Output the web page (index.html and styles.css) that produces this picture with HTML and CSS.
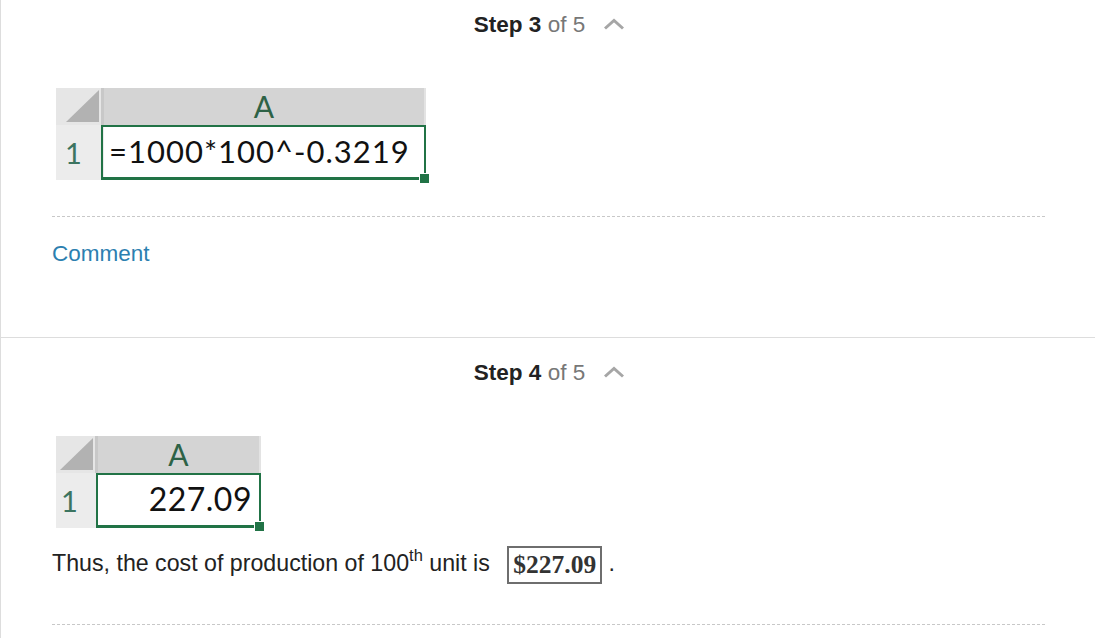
FILE: index.html
```html
<!DOCTYPE html>
<html>
<head>
<meta charset="utf-8">
<link rel="stylesheet" href="styles.css">
</head>
<body>
<div class="page">
  <section class="step first">
    <div class="step-head">
      <span class="step-title"><b>Step 3</b> <span class="of">of 5</span></span>
      <svg class="chev" width="22" height="12" viewBox="0 0 22 12"><path d="M2 10.5 L11 2.5 L20 10.5" fill="none" stroke="#a6a6a6" stroke-width="3"/></svg>
    </div>
    <div class="sheet sheet1">
      <div class="corner"><div class="tri"></div></div>
      <div class="colhead">A</div>
      <div class="rowhead">1</div>
      <div class="cell formula">=1000*100^-0.3219<span class="handle"></span></div>
    </div>
    <div class="dash"></div>
    <a class="comment">Comment</a>
  </section>
  <section class="step second">
    <div class="step-head">
      <span class="step-title"><b>Step 4</b> <span class="of">of 5</span></span>
      <svg class="chev" width="22" height="12" viewBox="0 0 22 12"><path d="M2 10.5 L11 2.5 L20 10.5" fill="none" stroke="#a6a6a6" stroke-width="3"/></svg>
    </div>
    <div class="sheet sheet2">
      <div class="corner"><div class="tri"></div></div>
      <div class="colhead">A</div>
      <div class="rowhead">1</div>
      <div class="cell value">227.09<span class="handle"></span></div>
    </div>
    <p class="answer">Thus, the cost of production of 100<sup>th</sup> unit is <span class="boxed">$227.09</span> .</p>
    <div class="dash"></div>
  </section>
</div>
</body>
</html>
```
FILE: styles.css
```css
html, body { margin: 0; padding: 0; background: #fff; }
body { font-family: "Liberation Sans", Arial, sans-serif; color: #333; }
.page { border-left: 1px solid #ddd; min-height: 638px; box-sizing: border-box; }
.step { padding: 0 50px 0 51px; border-bottom: 1px solid #ddd; }
.step.first { padding-top: 10px; height: 338px; box-sizing: border-box; }
.step.second { padding-top: 20px; border-bottom: none; }
.step-head { display: flex; justify-content: center; align-items: center; gap: 18px; height: 30px; padding-left: 2px; }
.step-title { font-size: 22.5px; color: #222; }
.step-title b { font-weight: bold; color: #222; }
.step-title .of { color: #777; }
.chev { display: block; margin-top: -2px; }

.sheet { display: grid; margin-left: 4px; margin-top: 48px; font-family: Lato, "Open Sans", sans-serif; background: #fff; }
.sheet1 { grid-template-columns: 48px 322px; grid-template-rows: 37px 55px; width: 370px; }
.sheet2 { grid-template-columns: 42px 163px; grid-template-rows: 37px 55px; width: 205px; }
.corner { background: #e6e6e6; position: relative; border-right: 3px solid #c8c8c8; }
.tri { position: absolute; right: 2px; bottom: 3px; width: 0; height: 0; border-style: solid; border-width: 0 0 32px 33px; border-color: transparent transparent #b2b2b2 transparent; }
.colhead { background: #d4d4d4; color: #2d6246; font-size: 30px; text-align: center; line-height: 37px; border-right: 2px solid #e3e3e3; }
.rowhead { background: #ececec; color: #3c7460; font-size: 29px; line-height: 55px; padding-left: 9px; }
.sheet2 .rowhead { padding-left: 5px; }
.cell { position: relative; border: 2px solid #217346; border-bottom-width: 3px; color: #111; font-size: 31px; line-height: 48px; white-space: nowrap; }
.cell.formula { padding-left: 6px; margin-left: -3px; letter-spacing: 1px; }
.cell.value { text-align: right; padding-right: 7px; margin-left: -2px; font-size: 32px; letter-spacing: 0.5px; }
.handle { position: absolute; right: -5px; bottom: -6px; width: 9px; height: 9px; background: #217346; border-left: 1px solid #fff; border-top: 1px solid #fff; }

.dash { height: 1px; margin-top: 36px; background: repeating-linear-gradient(90deg, #c8c8c8 0 3px, transparent 3px 5px); }
.comment { display: block; margin-top: 24px; color: #2c7fb0; font-size: 22.5px; cursor: pointer; }

.answer { margin: 16px 0 0 0; font-size: 23.2px; color: #222; line-height: 38px; }
.answer sup { font-size: 16.5px; vertical-align: 0; position: relative; top: -10px; }
.boxed { display: inline-block; font-family: "Liberation Serif", "Times New Roman", serif; font-weight: bold; font-size: 25.5px; color: #333; border: 2px solid #6e6e6e; padding: 0 4px; line-height: 34px; margin-left: 11px; vertical-align: middle; }
.second .dash { margin-top: 40px; }
```
